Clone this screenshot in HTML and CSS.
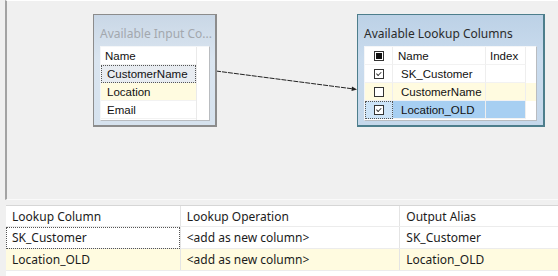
FILE: index.html
```html
<!DOCTYPE html>
<html lang="en">
<head>
<meta charset="UTF-8">
<title>Lookup Columns</title>
<link rel="stylesheet" href="styles.css">
</head>
<body>
    <div class="designer">
        <!-- зв'язок між колонками -->
        <svg class="link" width="558" height="200">
            <line x1="216" y1="71" x2="354" y2="89" stroke="#222" stroke-width="1" stroke-dasharray="5,1"/>
            <polygon points="357,89.5 352,86.5 351.5,91" fill="#222"/>
            <rect x="215" y="70" width="2" height="2" fill="#222"/>
        </svg>

        <div class="box input-box">
            <div class="box-title">Available Input Co...</div>
            <div class="list">
                <div class="col-name">
                    <div class="cell head">Name</div>
                    <div class="cell focus">CustomerName</div>
                    <div class="cell yellow">Location</div>
                    <div class="cell">Email</div>
                </div>
            </div>
        </div>

        <div class="box lookup-box">
            <div class="box-title">Available Lookup Columns</div>
            <div class="list">
                <div class="row head">
                    <div class="cell chk"><span class="check full"></span></div>
                    <div class="cell name">Name</div>
                    <div class="cell idx">Index</div>
                </div>
                <div class="row">
                    <div class="cell chk"><span class="check on"></span></div>
                    <div class="cell name">SK_Customer</div>
                    <div class="cell idx"></div>
                </div>
                <div class="row yellow">
                    <div class="cell chk"><span class="check"></span></div>
                    <div class="cell name">CustomerName</div>
                    <div class="cell idx"></div>
                </div>
                <div class="row selected">
                    <div class="cell chk focus"><span class="check on"></span></div>
                    <div class="cell name">Location_OLD</div>
                    <div class="cell idx"></div>
                </div>
            </div>
        </div>
    </div>

    <div class="grid">
        <table>
            <tr class="grid-head">
                <td class="c1">Lookup Column</td>
                <td class="c2">Lookup Operation</td>
                <td class="c3">Output Alias</td>
            </tr>
            <tr>
                <td class="c1 focus">SK_Customer</td>
                <td class="c2">&lt;add as new column&gt;</td>
                <td class="c3">SK_Customer</td>
            </tr>
            <tr class="yellow">
                <td class="c1">Location_OLD</td>
                <td class="c2">&lt;add as new column&gt;</td>
                <td class="c3">Location_OLD</td>
            </tr>
        </table>
    </div>
</body>
</html>
```

FILE: styles.css
```css
body {
    margin: 0;
    padding: 0;
    width: 558px;
    height: 276px;
    overflow: hidden;
    background-color: #f0f0f0;
    font-family: "Noto Sans", "Open Sans", sans-serif;
}

/* Верхня область з блоками */
.designer {
    position: relative;
    height: 200px;
    margin-left: 5px;
    border-left: 2px solid #a3a3a3;
    border-top: 1px solid #ffffff;
    border-bottom: 1px solid #fafafa;
    box-sizing: border-box;
}

.link {
    position: absolute;
    left: -7px;
    top: -1px;
}

.box {
    position: absolute;
    top: 13px;
    height: 113px;
    box-sizing: border-box;
    border: 1px solid #8c8c8c;
    border-bottom-width: 2px;
    border-right-width: 2px;
    padding: 0 6px;
}

.input-box {
    left: 86px;
    width: 124px;
    background: linear-gradient(#c9d7e6, #dae5f0 40%, #d6e2ee);
}

.lookup-box {
    left: 350px;
    width: 188px;
    border-color: #4d7e8c;
    background: linear-gradient(#bcd1e6, #cadcee 40%, #c5d8eb);
}

.box-title {
    height: 31px;
    line-height: 38px;
    font-size: 12px;
    white-space: nowrap;
    color: #2b2b2b;
}

.input-box .box-title {
    color: #a3a8ae;
}

.list {
    height: 73px;
    background-color: #ffffff;
    border: 1px solid #f4f6f8;
    border-right-color: #b9bcc0;
    border-bottom-color: #b9bcc0;
    font-family: "Liberation Sans", Arial, sans-serif;
    font-size: 11.5px;
    color: #111;
}

.input-box .list {
    margin-right: -1px;
}

.col-name {
    width: 95px;
    height: 100%;
    border-right: 1px solid #eaeaea;
}

.cell {
    height: 18px;
    line-height: 18px;
    padding-left: 6px;
    box-sizing: border-box;
    border-bottom: 1px solid #f2f2f2;
}

.cell.head {
    padding-left: 4px;
}

.cell.focus {
    border: 1px dotted #555;
    background-color: #e8ecf1;
    line-height: 16px;
    padding-left: 5px;
}

.yellow {
    background-color: #fffbe0;
}

/* Рядки таблиці колонок */
.row {
    display: flex;
    height: 18px;
}

.row .cell {
    border-right: 1px solid #eeeeee;
}

.chk {
    width: 28px;
    display: flex;
    align-items: center;
    padding-left: 9px;
}

.name {
    width: 93px;
    padding-left: 8px;
}

.row.head .name {
    padding-left: 5px;
}

.idx {
    width: 40px;
    padding-left: 4px;
}

.row.selected .name,
.row.selected .idx {
    background-color: #a7cff2;
}

.row.selected .chk.focus {
    background-color: #cde4f8;
    border: 1px dotted #555;
    padding-left: 8px;
}

.check {
    position: relative;
    width: 8px;
    height: 8px;
    border: 1px solid #333;
    background-color: #fff;
}

.check.full::after {
    content: "";
    position: absolute;
    left: 1px;
    top: 1px;
    width: 6px;
    height: 6px;
    background-color: #111;
}

.check.on::after {
    content: "";
    position: absolute;
    left: 2px;
    top: 0px;
    width: 4px;
    height: 2px;
    border-left: 1px solid #333;
    border-bottom: 1px solid #333;
    transform: rotate(-45deg);
    transform-origin: 0 0;
    top: 4px;
    left: 1px;
}

/* Нижня таблиця */
.grid {
    margin-top: 5px;
    margin-left: 6px;
    border-top: 1px solid #d6d6d6;
    background-color: #ffffff;
    height: 70px;
}

.grid table {
    border-collapse: collapse;
    font-size: 12px;
    color: #1b1b1b;
}

.grid td {
    height: 21px;
    padding: 0 0 0 6px;
    border-right: 1px solid #e4e4e4;
    border-bottom: 1px solid #ececec;
    white-space: nowrap;
}

.grid .c1 { width: 168px; }
.grid .c2 { width: 213px; }
.grid .c3 { width: 152px; border-right: none; }

.grid-head td {
    height: 20px;
}

.grid td.focus {
    outline: 1px dotted #555;
    outline-offset: -1px;
}
```
